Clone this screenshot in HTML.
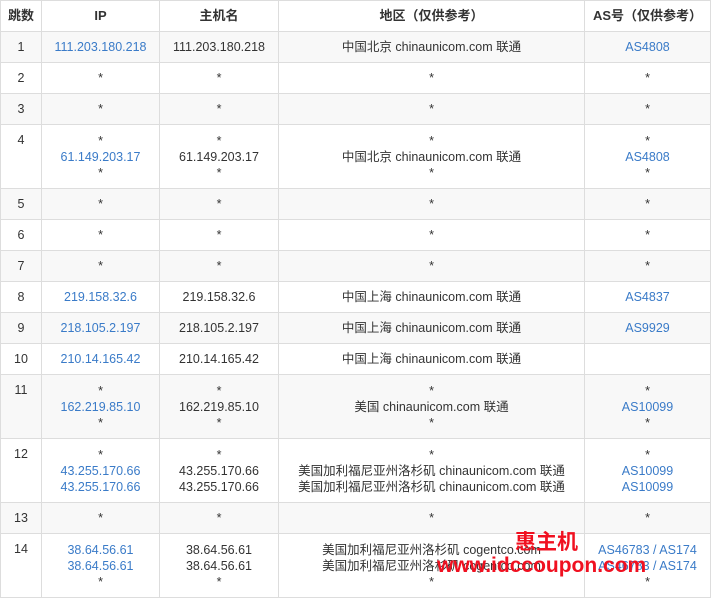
<!DOCTYPE html>
<html><head><meta charset="utf-8"><style>
body{margin:0;background:#fff;width:711px;height:598px;overflow:hidden;position:relative;font-family:"Liberation Sans","Noto Sans CJK SC",sans-serif;font-size:12.5px;color:#333}
table{border-collapse:collapse;table-layout:fixed;position:absolute;left:0;top:0;width:710px}
td,th{border:1px solid #ddd;text-align:center;padding:0;line-height:16px;vertical-align:middle}
th{font-weight:bold;height:30px;font-size:13px}
tr.g td{background:#f8f8f8}
tr.s td{height:30px}
tr.t td{height:63px}
tr.t td:first-child{vertical-align:top;padding-top:7px;height:56px}
.b{color:#3a7bc8}
.k{color:#333}
.wm{position:absolute;color:#f01020;font-weight:bold;font-family:"Liberation Sans","Noto Sans CJK SC",sans-serif}
</style></head><body>
<table>
<colgroup><col style="width:41px"><col style="width:118px"><col style="width:119px"><col style="width:306px"><col style="width:126px"></colgroup>
<tr><th>跳数</th><th>IP</th><th>主机名</th><th>地区（仅供参考）</th><th>AS号（仅供参考）</th></tr>
<tr class="s g"><td>1</td><td class="b">111.203.180.218</td><td>111.203.180.218</td><td>中国北京 chinaunicom.com 联通</td><td class="b">AS4808</td></tr>
<tr class="s"><td>2</td><td>*</td><td>*</td><td>*</td><td>*</td></tr>
<tr class="s g"><td>3</td><td>*</td><td>*</td><td>*</td><td>*</td></tr>
<tr class="t"><td>4</td><td class="b"><span class="k">*</span><br>61.149.203.17<br><span class="k">*</span></td><td>*<br>61.149.203.17<br>*</td><td>*<br>中国北京 chinaunicom.com 联通<br>*</td><td class="b"><span class="k">*</span><br>AS4808<br><span class="k">*</span></td></tr>
<tr class="s g"><td>5</td><td>*</td><td>*</td><td>*</td><td>*</td></tr>
<tr class="s"><td>6</td><td>*</td><td>*</td><td>*</td><td>*</td></tr>
<tr class="s g"><td>7</td><td>*</td><td>*</td><td>*</td><td>*</td></tr>
<tr class="s"><td>8</td><td class="b">219.158.32.6</td><td>219.158.32.6</td><td>中国上海 chinaunicom.com 联通</td><td class="b">AS4837</td></tr>
<tr class="s g"><td>9</td><td class="b">218.105.2.197</td><td>218.105.2.197</td><td>中国上海 chinaunicom.com 联通</td><td class="b">AS9929</td></tr>
<tr class="s"><td>10</td><td class="b">210.14.165.42</td><td>210.14.165.42</td><td>中国上海 chinaunicom.com 联通</td><td></td></tr>
<tr class="t g"><td>11</td><td class="b"><span class="k">*</span><br>162.219.85.10<br><span class="k">*</span></td><td>*<br>162.219.85.10<br>*</td><td>*<br>美国 chinaunicom.com 联通<br>*</td><td class="b"><span class="k">*</span><br>AS10099<br><span class="k">*</span></td></tr>
<tr class="t"><td>12</td><td class="b"><span class="k">*</span><br>43.255.170.66<br>43.255.170.66</td><td>*<br>43.255.170.66<br>43.255.170.66</td><td>*<br>美国加利福尼亚州洛杉矶 chinaunicom.com 联通<br>美国加利福尼亚州洛杉矶 chinaunicom.com 联通</td><td class="b"><span class="k">*</span><br>AS10099<br>AS10099</td></tr>
<tr class="s g"><td>13</td><td>*</td><td>*</td><td>*</td><td>*</td></tr>
<tr class="t"><td>14</td><td class="b">38.64.56.61<br>38.64.56.61<br><span class="k">*</span></td><td>38.64.56.61<br>38.64.56.61<br>*</td><td>美国加利福尼亚州洛杉矶 cogentco.com<br>美国加利福尼亚州洛杉矶 cogentco.com<br>*</td><td class="b">AS46783 / AS174<br>AS46783 / AS174<br><span class="k">*</span></td></tr>
</table>
<div class="wm" style="left:515px;top:526px;font-size:21px">惠主机</div>
<div class="wm" style="left:437px;top:554px;font-size:21px">www.idccoupon.com</div>
</body></html>
